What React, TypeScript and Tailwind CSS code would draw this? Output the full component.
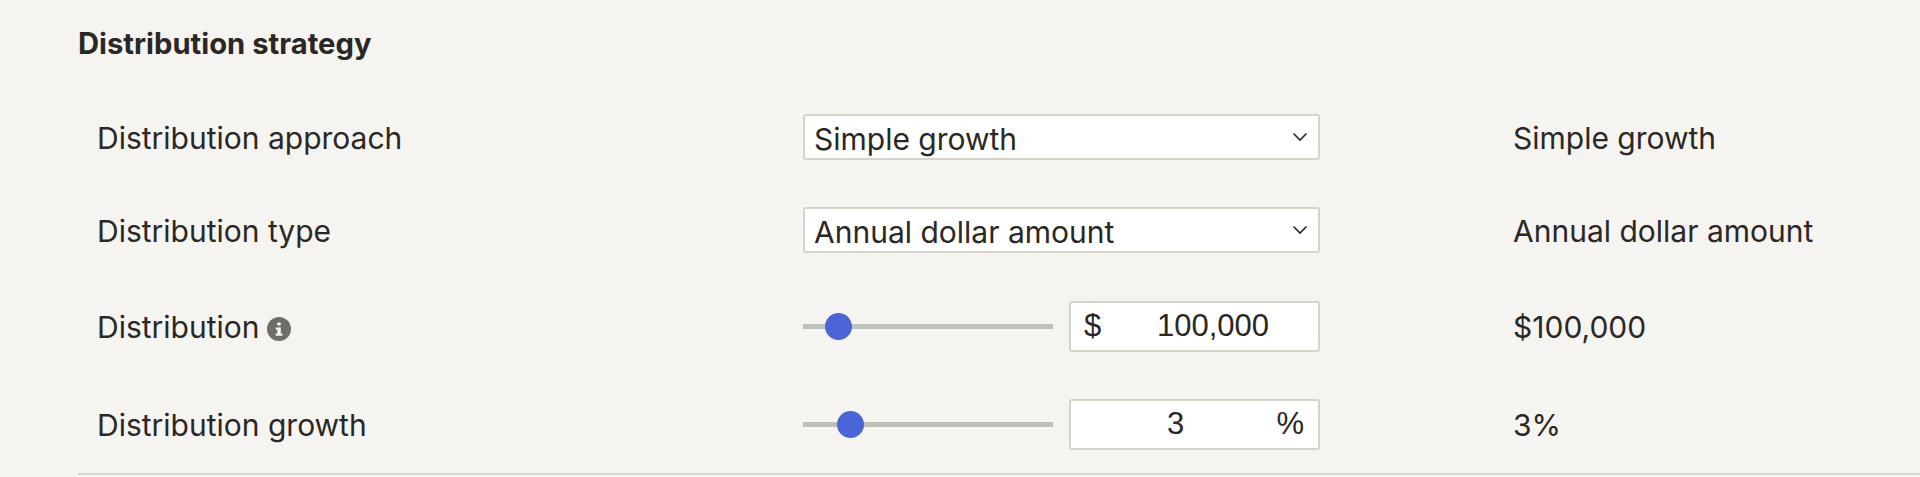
const font = "font-['Inter','Noto_Sans',sans-serif]";

function Row({ label, info, control, value, className }: { label: string; info?: boolean; control: React.ReactNode; value: string; className: string }) {
  return (
    <div className={`flex items-center ${className}`}>
      <div className="w-[725px] shrink-0 pl-[19px] flex items-center text-[30px] pt-[2px]">
        {label}
        {info && (
          <svg className="ml-[7px] mt-[3px]" width="24" height="24" viewBox="0 0 24 24">
            <circle cx="12" cy="12" r="12" fill="#6f6d6a" />
            <rect x="10.2" y="5.5" width="3.6" height="3" rx="1" fill="#f5f3ef" />
            <path d="M8.8 10.5h5v6h1.6v2.2H8.6v-2.2h1.8v-3.8H8.8z" fill="#f5f3ef" />
          </svg>
        )}
      </div>
      <div className="w-[517px] shrink-0">{control}</div>
      <div className="pl-[193px] text-[30px] pt-[2px] whitespace-nowrap">{value}</div>
    </div>
  );
}

function Select({ text }: { text: string }) {
  return (
    <div className="h-[46px] w-[517px] bg-white border-2 border-[#d8d3c9] rounded-[3px] flex items-center justify-between pl-[9px] pr-[10px] text-[30px]">
      <span className="mt-[5px]">{text}</span>
      <svg width="16" height="10" viewBox="0 0 16 10" fill="none" stroke="#2a2725" strokeWidth="1.6">
        <path d="M1.5 1.5 8 8l6.5-6.5" />
      </svg>
    </div>
  );
}

function SliderInput({ thumbLeft, children }: { thumbLeft: number; children: React.ReactNode }) {
  return (
    <div className="flex items-center justify-between w-[517px]">
      <div className="relative w-[250px] h-[5px] bg-[#c2c0bc]">
        <div className="absolute top-[-11px] w-[27px] h-[27px] rounded-full bg-[#4a66d6]" style={{ left: thumbLeft }} />
      </div>
      <div className="h-[51px] w-[251px] bg-white border-2 border-[#d8d3c9] rounded-[3px] flex items-center text-[31px] font-['Liberation_Sans',sans-serif]">
        {children}
      </div>
    </div>
  );
}

export default function App() {
  return (
    <div className={`h-[477px] bg-[#f6f4f0] text-[#2a2725] overflow-hidden pt-[24px] ${font}`}>
      <div className="ml-[78px] border-b-2 border-[#ddd6cc] h-[451px]">
        <h2 className="text-[29.2px] font-bold leading-[40px]">Distribution strategy</h2>
        <Row className="mt-[50px] h-[46px]" label="Distribution approach" value="Simple growth" control={<Select text="Simple growth" />} />
        <Row className="mt-[47px] h-[46px]" label="Distribution type" value="Annual dollar amount" control={<Select text="Annual dollar amount" />} />
        <Row
          className="mt-[48px] h-[51px]"
          label="Distribution"
          info
          value="$100,000"
          control={
            <SliderInput thumbLeft={22}>
              <span className="pl-[13px] w-[86px]">$</span>
              <span>100,000</span>
            </SliderInput>
          }
        />
        <Row
          className="mt-[47px] h-[51px]"
          label="Distribution growth"
          value="3%"
          control={
            <SliderInput thumbLeft={34}>
              <span className="pl-[96px]">3</span>
              <span className="ml-auto pr-[14px]">%</span>
            </SliderInput>
          }
        />
      </div>
    </div>
  );
}
